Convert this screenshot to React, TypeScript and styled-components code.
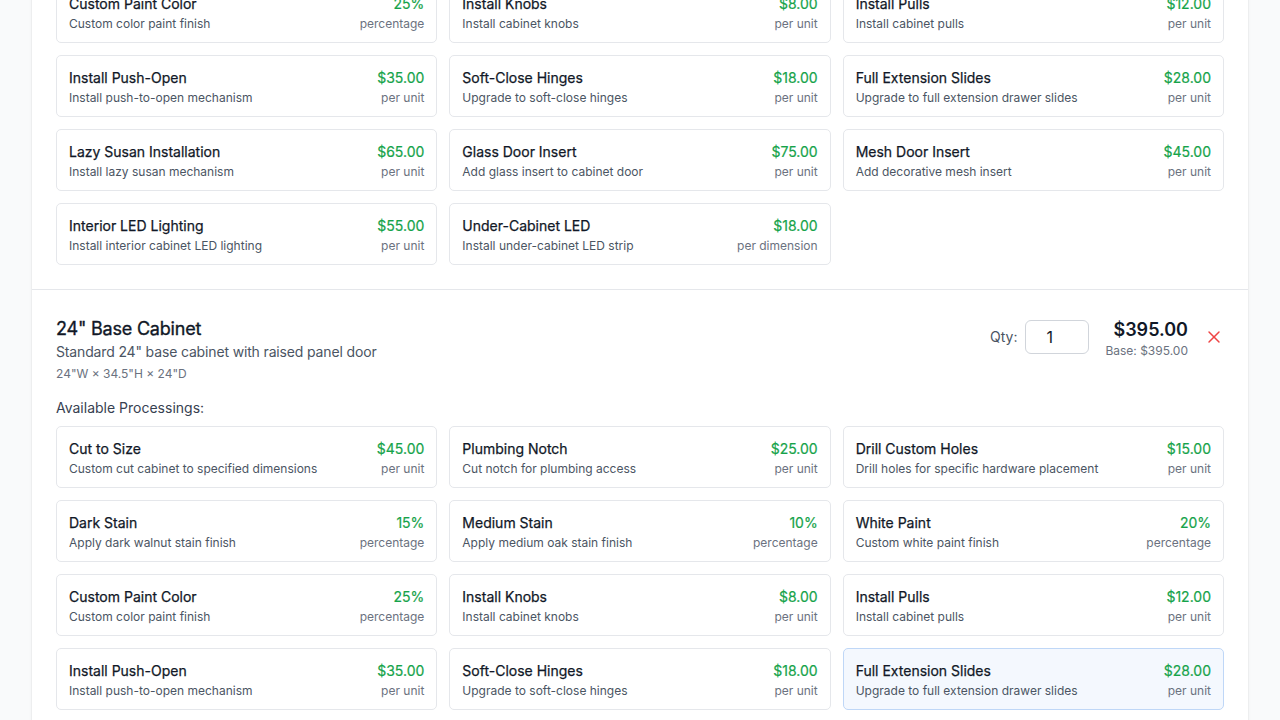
import React, { useLayoutEffect, useRef } from "react";
import styled, { createGlobalStyle } from "styled-components";
import { X } from "lucide-react";

type Processing = {
  name: string;
  desc: string;
  price: string;
  unit: string;
};

type Cabinet = {
  id: number;
  name: string;
  desc: string;
  dims: string;
  price: string;
  base: string;
};

const processings: Processing[] = [
  { name: "Cut to Size", desc: "Custom cut cabinet to specified dimensions", price: "$45.00", unit: "per unit" },
  { name: "Plumbing Notch", desc: "Cut notch for plumbing access", price: "$25.00", unit: "per unit" },
  { name: "Drill Custom Holes", desc: "Drill holes for specific hardware placement", price: "$15.00", unit: "per unit" },
  { name: "Dark Stain", desc: "Apply dark walnut stain finish", price: "15%", unit: "percentage" },
  { name: "Medium Stain", desc: "Apply medium oak stain finish", price: "10%", unit: "percentage" },
  { name: "White Paint", desc: "Custom white paint finish", price: "20%", unit: "percentage" },
  { name: "Custom Paint Color", desc: "Custom color paint finish", price: "25%", unit: "percentage" },
  { name: "Install Knobs", desc: "Install cabinet knobs", price: "$8.00", unit: "per unit" },
  { name: "Install Pulls", desc: "Install cabinet pulls", price: "$12.00", unit: "per unit" },
  { name: "Install Push-Open", desc: "Install push-to-open mechanism", price: "$35.00", unit: "per unit" },
  { name: "Soft-Close Hinges", desc: "Upgrade to soft-close hinges", price: "$18.00", unit: "per unit" },
  { name: "Full Extension Slides", desc: "Upgrade to full extension drawer slides", price: "$28.00", unit: "per unit" },
  { name: "Lazy Susan Installation", desc: "Install lazy susan mechanism", price: "$65.00", unit: "per unit" },
  { name: "Glass Door Insert", desc: "Add glass insert to cabinet door", price: "$75.00", unit: "per unit" },
  { name: "Mesh Door Insert", desc: "Add decorative mesh insert", price: "$45.00", unit: "per unit" },
  { name: "Interior LED Lighting", desc: "Install interior cabinet LED lighting", price: "$55.00", unit: "per unit" },
  { name: "Under-Cabinet LED", desc: "Install under-cabinet LED strip", price: "$18.00", unit: "per dimension" },
];

const cabinets: Cabinet[] = [
  {
    id: 1,
    name: '30" Wall Cabinet',
    desc: 'Standard 30" wall cabinet with shaker door',
    dims: '30"W × 30"H × 12"D',
    price: "$285.00",
    base: "Base: $285.00",
  },
  {
    id: 2,
    name: '24" Base Cabinet',
    desc: 'Standard 24" base cabinet with raised panel door',
    dims: '24"W × 34.5"H × 24"D',
    price: "$395.00",
    base: "Base: $395.00",
  },
];

const GlobalStyle = createGlobalStyle`
  * { box-sizing: border-box; }
  html, body {
    margin: 0;
    padding: 0;
    background: #f9fafb;
    font-family: Inter, "Noto Sans", sans-serif;
    color: #111827;
  }
`;

const App = () => {
  const areaRef = useRef<HTMLDivElement>(null);
  const focusRef = useRef<HTMLDivElement>(null);

  // the shot is taken part way down the list
  useLayoutEffect(() => {
    const area = areaRef.current;
    const target = focusRef.current;
    if (!area || !target) return;
    const delta =
      target.getBoundingClientRect().top - area.getBoundingClientRect().top;
    area.scrollTop = delta - 289;
  }, []);

  return (
    <>
      <GlobalStyle />
      <ScrollArea ref={areaRef}>
        <Page>
          <PageTitle>Cabinet Order</PageTitle>
          <Panel>
            {cabinets.map((cab, ci) => (
              <Section key={cab.id} ref={ci === 1 ? focusRef : undefined}>
                <SectionHead>
                  <div>
                    <CabTitle>{cab.name}</CabTitle>
                    <CabDesc>{cab.desc}</CabDesc>
                    <CabDims>{cab.dims}</CabDims>
                  </div>
                  <Controls>
                    <QtyGroup>
                      <QtyLabel>Qty:</QtyLabel>
                      <QtyInput type="text" defaultValue="1" />
                    </QtyGroup>
                    <PriceBlock>
                      <Total>{cab.price}</Total>
                      <BasePrice>{cab.base}</BasePrice>
                    </PriceBlock>
                    <RemoveButton aria-label="Remove">
                      <X size={20} strokeWidth={1.75} />
                    </RemoveButton>
                  </Controls>
                </SectionHead>
                <GridLabel>Available Processings:</GridLabel>
                <Grid>
                  {processings.map((p, i) => (
                    <Card key={p.name} $active={ci === 1 && i === 11}>
                      <CardText>
                        <CardTitle>{p.name}</CardTitle>
                        <CardDesc>{p.desc}</CardDesc>
                      </CardText>
                      <CardPrice>
                        <Amount>{p.price}</Amount>
                        <Unit>{p.unit}</Unit>
                      </CardPrice>
                    </Card>
                  ))}
                </Grid>
              </Section>
            ))}
          </Panel>
        </Page>
      </ScrollArea>
    </>
  );
};

const ScrollArea = styled.div`
  height: 100vh;
  overflow: hidden;
`;

const Page = styled.div`
  padding: 32px 32px 48px;
`;

const PageTitle = styled.h1`
  margin: 0 0 24px;
  font-size: 24px;
  font-weight: 600;
  color: #111827;
`;

const Panel = styled.div`
  background: #ffffff;
  border-radius: 8px;
  box-shadow: 0 1px 3px rgba(0, 0, 0, 0.1), 0 1px 2px rgba(0, 0, 0, 0.06);
`;

const Section = styled.div`
  padding: 24px;
  & + & {
    border-top: 1px solid #e5e7eb;
  }
`;

const SectionHead = styled.div`
  display: flex;
  justify-content: space-between;
  align-items: flex-start;
  margin-bottom: 16px;
`;

const CabTitle = styled.h3`
  margin: 1px 0 0;
  font-size: 18px;
  line-height: 27px;
  font-weight: 400;
  letter-spacing: -0.2px;
  -webkit-text-stroke: 0.35px currentColor;
  color: #111827;
`;

const CabDesc = styled.p`
  margin: 0;
  font-size: 14px;
  line-height: 20px;
  letter-spacing: -0.15px;
  color: #4b5563;
`;

const CabDims = styled.p`
  margin: 4px 0 0;
  font-size: 12px;
  line-height: 16px;
  color: #6b7280;
`;

const Controls = styled.div`
  display: flex;
  align-items: center;
  gap: 16px;
`;

const QtyGroup = styled.div`
  display: flex;
  align-items: center;
  gap: 8px;
`;

const QtyLabel = styled.span`
  font-size: 14px;
  color: #4b5563;
`;

const QtyInput = styled.input`
  width: 64px;
  height: 34px;
  padding: 0 8px 0 20px;
  border: 1px solid #d1d5db;
  border-radius: 6px;
  font-family: Inter, sans-serif;
  font-size: 16px;
  color: #111827;
  outline: none;
`;

const PriceBlock = styled.div`
  text-align: right;
  padding-top: 2px;
`;

const Total = styled.div`
  font-size: 18px;
  line-height: 27px;
  font-weight: 600;
  color: #111827;
`;

const BasePrice = styled.div`
  font-size: 12px;
  line-height: 16px;
  color: #6b7280;
`;

const RemoveButton = styled.button`
  display: flex;
  padding: 0;
  border: none;
  background: none;
  color: #ef4444;
  cursor: pointer;
`;

const GridLabel = styled.div`
  margin-bottom: 8px;
  font-size: 14px;
  line-height: 20px;
  font-weight: 400;
  color: #374151;
`;

const Grid = styled.div`
  display: grid;
  grid-template-columns: repeat(3, 1fr);
  gap: 12px;
`;

const Card = styled.div<{ $active?: boolean }>`
  display: flex;
  justify-content: space-between;
  align-items: flex-start;
  padding: 12px 12px 10px;
  border: 1px solid ${(p) => (p.$active ? "#bfd7f7" : "#e5e7eb")};
  border-radius: 5px;
  background: ${(p) => (p.$active ? "#f4f8fe" : "#ffffff")};
`;

const CardText = styled.div`
  min-width: 0;
`;

const CardTitle = styled.div`
  font-size: 14px;
  line-height: 20px;
  font-weight: 400;
  -webkit-text-stroke: 0.25px currentColor;
  color: #111827;
`;

const CardDesc = styled.div`
  margin-top: 2px;
  font-size: 12px;
  line-height: 16px;
  color: #4b5563;
`;

const CardPrice = styled.div`
  flex-shrink: 0;
  margin-left: 8px;
  text-align: right;
`;

const Amount = styled.div`
  font-size: 14px;
  line-height: 20px;
  font-weight: 400;
  -webkit-text-stroke: 0.2px currentColor;
  color: #16a34a;
`;

const Unit = styled.div`
  margin-top: 2px;
  font-size: 12px;
  line-height: 16px;
  color: #6b7280;
`;

export default App;
